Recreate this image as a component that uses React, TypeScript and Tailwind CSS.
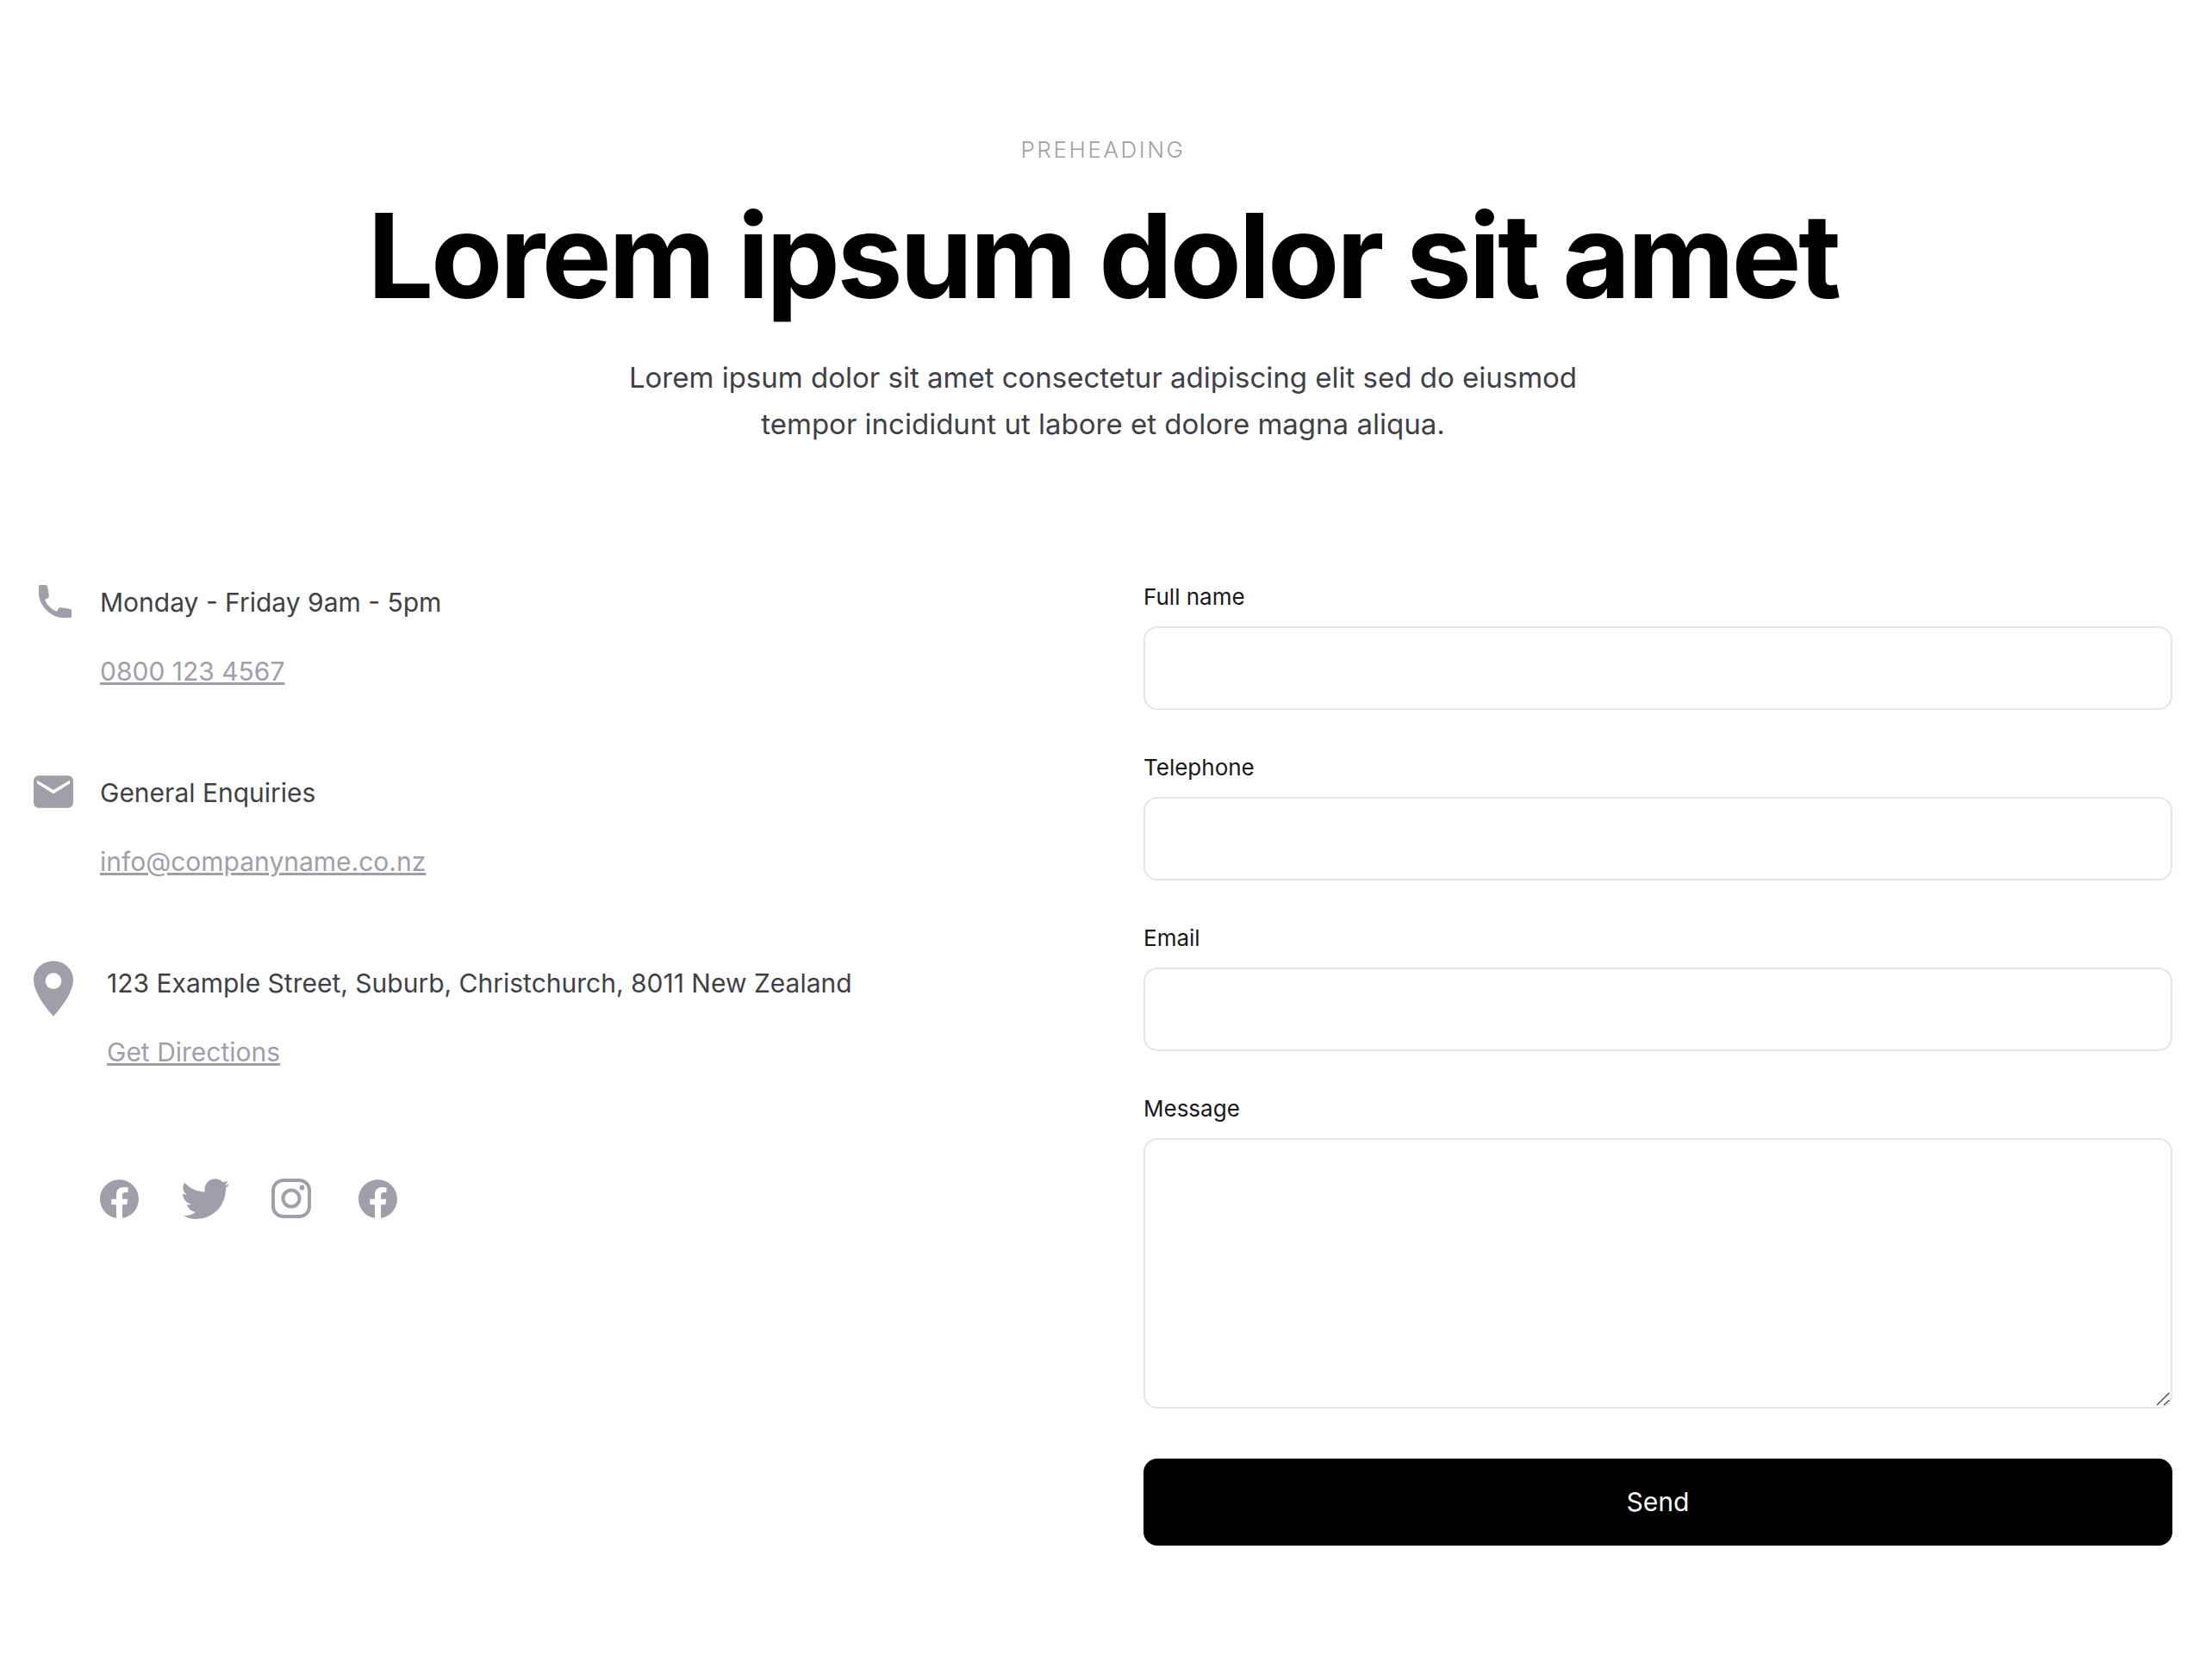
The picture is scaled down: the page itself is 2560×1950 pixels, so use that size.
import type { ReactNode } from 'react'

function PhoneIcon() {
  return (
    <svg viewBox="2 2 16 16" className="h-[38px] w-[38px]" fill="currentColor" stroke="currentColor" strokeWidth="0.3" aria-hidden="true">
      <path d="M2 3a1 1 0 011-1h2.153a1 1 0 01.986.836l.74 4.435a1 1 0 01-.54 1.06l-1.548.773a11.037 11.037 0 006.105 6.105l.774-1.548a1 1 0 011.059-.54l4.435.74a1 1 0 01.836.986V17a1 1 0 01-1 1h-2C7.82 18 2 12.18 2 5V3z" />
    </svg>
  )
}

function MailIcon() {
  return (
    <svg viewBox="0 0 140 114" className="h-[38px] w-[46px]" aria-hidden="true">
      <rect width="140" height="114" rx="18" fill="currentColor" />
      <path d="M12 16L70 51L128 16V28L70 64L12 28Z" fill="white" />
    </svg>
  )
}

function PinIcon() {
  return (
    <svg viewBox="0 0 140 195" className="h-[65px] w-[46px]" fill="currentColor" aria-hidden="true">
      <path
        fillRule="evenodd"
        d="M70 0C31 0 0 29 0 67C0 104 33 155 70 195C107 155 140 104 140 67C140 29 109 0 70 0ZM70 42a28.500 28.500 0 1 1 0 57a28.500 28.500 0 1 1 0-57Z"
      />
    </svg>
  )
}

function FacebookIcon() {
  return (
    <svg viewBox="0 0 24 24" className="h-[45px] w-[45px]" fill="currentColor" aria-hidden="true">
      <path d="M24 12.073c0-6.627-5.373-12-12-12s-12 5.373-12 12c0 5.99 4.388 10.954 10.125 11.854v-8.385H7.078v-3.47h3.047V9.43c0-3.007 1.792-4.669 4.533-4.669 1.312 0 2.686.235 2.686.235v2.953H15.83c-1.491 0-1.956.925-1.956 1.874v2.25h3.328l-.532 3.47h-2.796v8.385C19.612 23.027 24 18.062 24 12.073z" />
    </svg>
  )
}

function TwitterIcon() {
  return (
    <svg viewBox="18 23 165 141" className="h-[47px] w-[55px]" fill="currentColor" aria-hidden="true">
      <path d="M28 37C46 57 70 68 98 69C94 43 112 23 135 23.500C145 24 153 28 161 36C166 35 171 34 177 32C175 38 172 42 168 46C173 46 178 44 183 42C180 48 176 52 171 57C172 114 130 164 68 164C51 164 37 160 25 152C41 153 54 149 66 139C51 138 40 128 36 113C41 114 46 114 50 112C32 107 21 93 21 75C26 78 31 80 36 80C20 68 18 52 28 37Z" />
    </svg>
  )
}

function InstagramIcon() {
  return (
    <svg viewBox="0 0 140 140" className="h-[46px] w-[46px]" fill="none" stroke="currentColor" strokeWidth="12" aria-hidden="true">
      <rect x="6" y="6" width="128" height="128" rx="36" />
      <circle cx="70" cy="70" r="29" />
      <circle cx="108" cy="32" r="9" fill="currentColor" stroke="none" />
    </svg>
  )
}

function ContactRow({ icon, text, link, href, className }: { icon: ReactNode; text: string; link: string; href: string; className: string }) {
  return (
    <li className={`flex items-start ${className}`}>
      <span className="flex w-[46px] shrink-0 justify-center text-zinc-400">{icon}</span>
      <div className="flex flex-col items-start gap-8">
        <p>{text}</p>
        <a href={href} className="text-zinc-400 underline">{link}</a>
      </div>
    </li>
  )
}

function Field({ id, label, type }: { id: string; label: string; type: string }) {
  return (
    <div className="flex flex-col gap-4">
      <label htmlFor={id} className="text-[26px] leading-9 text-zinc-900">{label}</label>
      <input id={id} name={id} type={type} className="w-full rounded-2xl border-2 border-neutral-200 bg-white px-6 py-6 text-[30px] leading-[45px]" />
    </div>
  )
}

const socials = [
  { name: 'Facebook', icon: <FacebookIcon /> },
  { name: 'Twitter', icon: <TwitterIcon /> },
  { name: 'Instagram', icon: <InstagramIcon /> },
  { name: 'Facebook page', icon: <FacebookIcon /> },
]

export default function App() {
  return (
    <main className="bg-white px-[39px] py-[154px] font-['Inter',sans-serif] text-[30px] leading-[48px] text-zinc-700">
      <header className="flex flex-col items-center text-center">
        <p className="text-[26px] font-light leading-10 tracking-widest text-zinc-400 uppercase">Preheading</p>
        <h1 className="mt-[35px] text-[136px] font-bold leading-[136px] tracking-tight text-black">Lorem ipsum dolor sit amet</h1>
        <p className="mt-[46px] max-w-[1180px] text-[33px] leading-[54px]">
          Lorem ipsum dolor sit amet consectetur adipiscing elit sed do eiusmod tempor incididunt ut labore et dolore magna aliqua.
        </p>
      </header>

      <div className="mt-[156px] grid grid-cols-2 gap-[94px]">
        <section aria-label="Contact details">
          <ul className="flex flex-col gap-[93px]">
            <ContactRow icon={<span className="mt-1 pl-1"><PhoneIcon /></span>} text="Monday - Friday 9am - 5pm" link="0800 123 4567" href="tel:08001234567" className="gap-[31px]" />
            <ContactRow icon={<span className="mt-1"><MailIcon /></span>} text="General Enquiries" link="info@companyname.co.nz" href="mailto:info@companyname.co.nz" className="gap-[31px]" />
            <ContactRow icon={<span className="-mt-0.5 -mb-4"><PinIcon /></span>} text="123 Example Street, Suburb, Christchurch, 8011 New Zealand" link="Get Directions" href="#directions" className="gap-[39px]" />
          </ul>
          <div className="mt-[122px] flex gap-11 pl-[71px] text-zinc-400">
            {socials.map((s) => (
              <a key={s.name} href="#social" aria-label={s.name} className="flex h-12 w-14 items-center justify-center">{s.icon}</a>
            ))}
          </div>
        </section>

        <form className="flex flex-col gap-[49px]">
          <Field id="name" label="Full name" type="text" />
          <Field id="telephone" label="Telephone" type="tel" />
          <Field id="email" label="Email" type="email" />
          <div className="flex flex-col gap-4">
            <label htmlFor="message" className="text-[26px] leading-9 text-zinc-900">Message</label>
            <div className="relative flex">
              <textarea id="message" name="message" rows={6} className="w-full resize-none rounded-2xl border-2 border-neutral-200 bg-white px-6 py-5 text-[30px] leading-[45px]" />
              <svg viewBox="0 0 16 16" className="pointer-events-none absolute right-[3px] bottom-[3px] h-4 w-4 text-zinc-600" fill="none" stroke="currentColor" strokeWidth="1.5" strokeLinecap="round" aria-hidden="true">
                <path d="M1.500 14.500L15 1M9.500 14.500L15 9.500" />
              </svg>
            </div>
          </div>
          <button type="button" className="mt-[9px] w-full rounded-2xl bg-black py-[27px] text-[30px] leading-[47px] text-white">Send</button>
        </form>
      </div>
    </main>
  )
}
